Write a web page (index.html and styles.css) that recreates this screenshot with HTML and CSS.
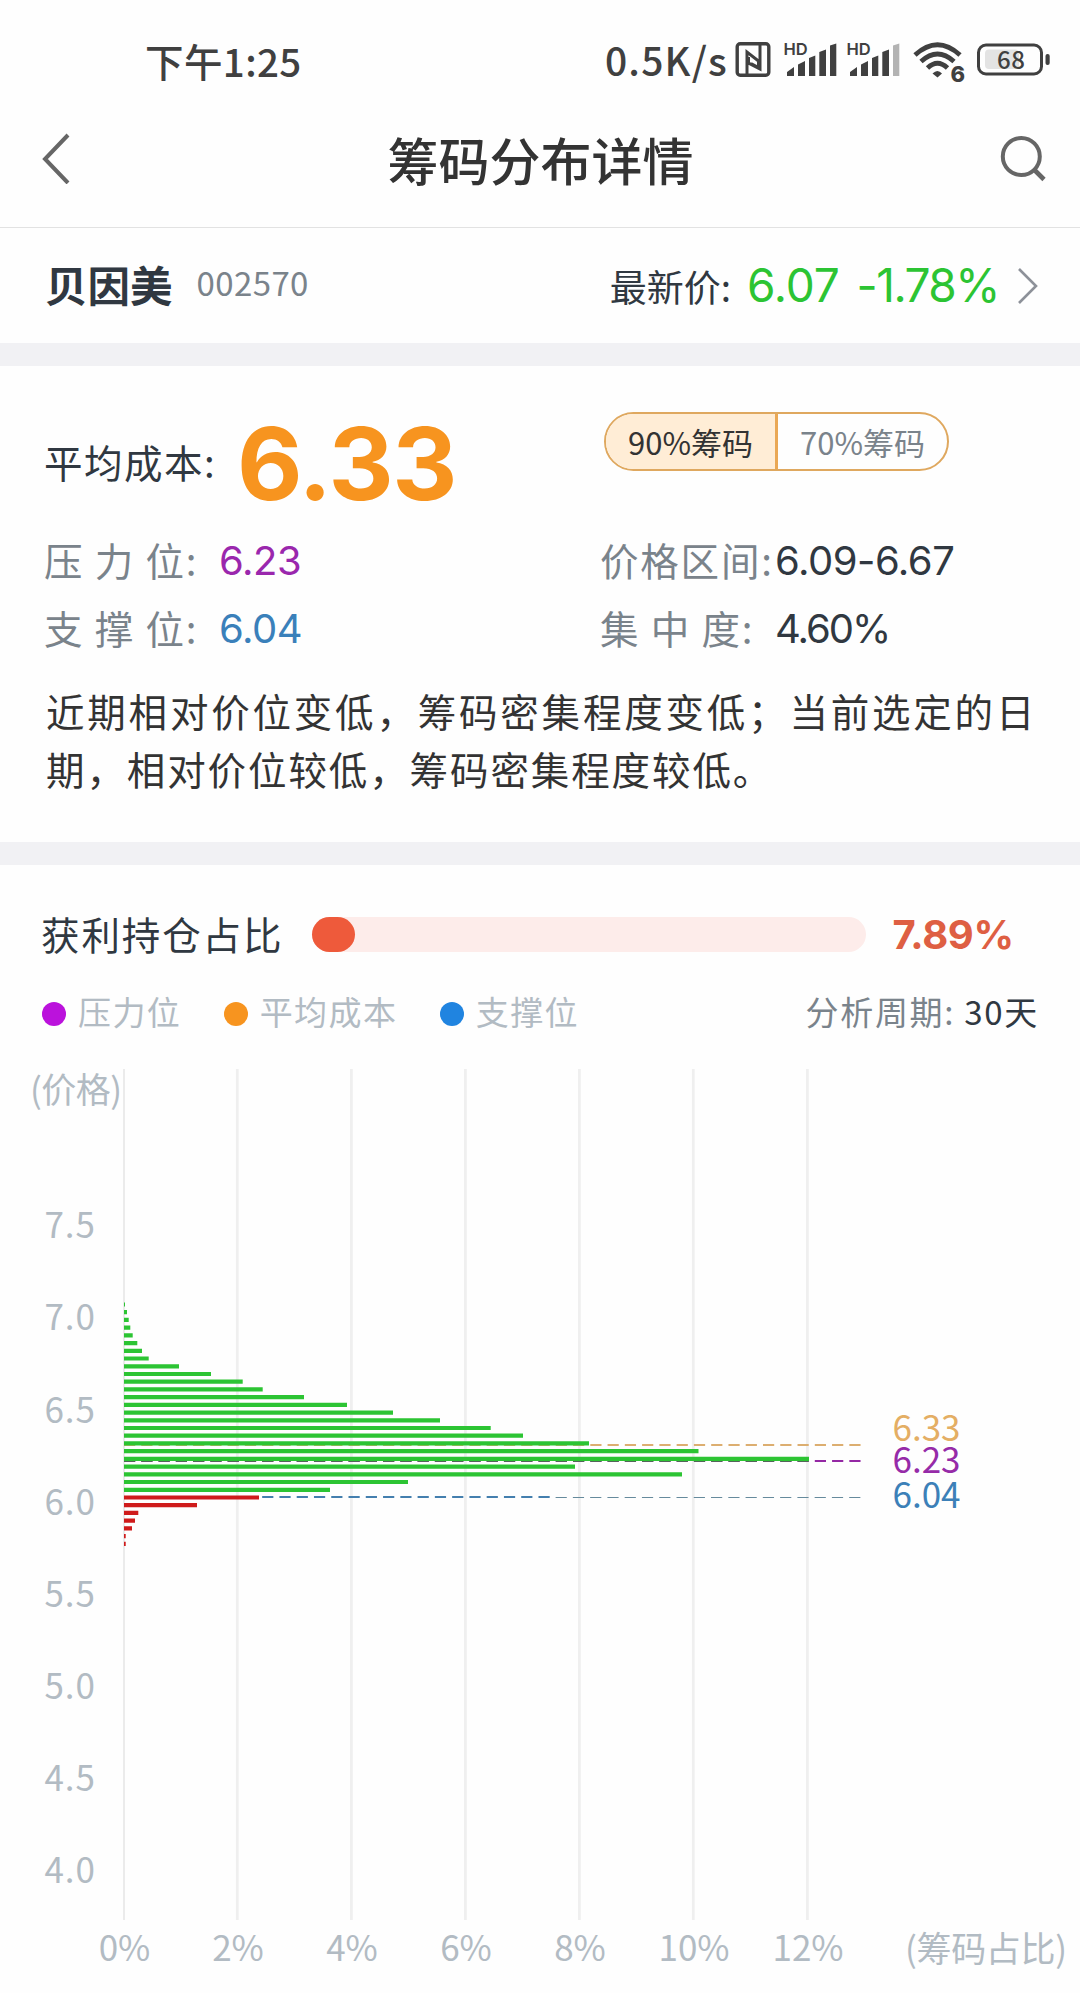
FILE: index.html
```
<!DOCTYPE html>
<html lang="zh-CN">
<head>
    <meta charset="UTF-8">
    <meta name="viewport" content="width=device-width, initial-scale=1.0">
    <title>筹码分布详情</title>
    <link rel="stylesheet" href="styles.css">
</head>
<body>
<div class="status-bar">
    <span class="time">下午1:25</span>
    <span class="speed">0.5K/s</span>
    <svg class="status-icons" width="320" height="50" viewBox="732 36 320 50">
        <!-- nfc -->
        <rect x="737.2" y="43.7" width="31.6" height="31.6" rx="3" fill="none" stroke="#404040" stroke-width="3.4"/>
        <path d="M747 74V52L758.500 61V67.500L751 63.500M760 45V69L748.500 63V57" fill="none" stroke="#404040" stroke-width="3"/>
        <!-- signal 1 -->
        <text class="hd" x="783.5" y="55">HD</text>
        <path d="M787 76V72L794 67V76ZM798 76V64.500L805 61V76ZM809 76V58L815.300 55.500V76ZM819.300 76V52L826 49.500V76ZM830 76V45.500L836.300 43.500V76Z" fill="#404040"/>
        <!-- signal 2 -->
        <text class="hd" x="846.5" y="55">HD</text>
        <path d="M850 76V72L857 67V76ZM861 76V64.500L868 61V76ZM872 76V58L878.300 55.500V76ZM882.300 76V52L889 49.500V76Z" fill="#404040"/>
        <path d="M893 76V45.500L899.300 43.500V76Z" fill="#b3b3b3"/>
        <!-- wifi -->
        <g fill="none" stroke="#404040" stroke-width="4.800">
            <path d="M915 55Q937.500 34.500 960 55"/>
            <path d="M921 61.500Q937.500 46.500 954 61.500"/>
            <path d="M927.500 68Q937.500 58.500 947.500 68"/>
        </g>
        <path d="M932.500 73.500Q937.500 68.500 942 73.500L937.500 77.500Z" fill="#404040"/>
        <text class="wifi-gen" x="950.500" y="82">6</text>
        <!-- battery -->
        <rect x="985" y="49.500" width="34" height="19.500" rx="4" fill="#e3e3e3"/>
        <rect x="978.500" y="45" width="63" height="29" rx="7.500" fill="none" stroke="#404040" stroke-width="3"/>
        <rect x="1045.500" y="54" width="4.200" height="11" rx="2" fill="#404040"/>
        <text class="battery" x="997" y="69" textLength="28">68</text>
    </svg>
</div>

<div class="header">
    <svg class="back" width="30" height="52" viewBox="0 0 30 52">
        <path d="M27 3L4 27L27 51" fill="none" stroke="#666" stroke-width="4"/>
    </svg>
    <h1>筹码分布详情</h1>
    <svg class="search" width="48" height="48" viewBox="0 0 48 48">
        <circle cx="21.300" cy="22.500" r="18.500" fill="none" stroke="#666" stroke-width="4"/>
        <path d="M34 35.500L44 45.500" stroke="#666" stroke-width="4.600"/>
    </svg>
</div>

<div class="stock">
    <span class="stock-name">贝因美</span>
    <span class="stock-code">002570</span>
    <span class="price-label">最新价:</span>
    <span class="price">6.07</span>
    <span class="change">-1.78%</span>
    <svg class="more" width="22" height="38" viewBox="0 0 22 38">
        <path d="M2 2L19 19L2 36" fill="none" stroke="#8d9199" stroke-width="2.600"/>
    </svg>
</div>

<div class="band"></div>

<div class="summary">
    <div class="row row-top">
        <div class="col-left">
            <span class="label dark">平均成本:</span>
            <span class="avg">6.33</span>
        </div>
        <div class="tabs">
            <span class="tab active">90%筹码</span>
            <span class="tab">70%筹码</span>
        </div>
    </div>
    <div class="row">
        <div class="col-left">
            <span class="label">压 力 位:</span>
            <span class="value purple">6.23</span>
        </div>
        <div class="col-right">
            <span class="label">价格区间:</span>
            <span class="value">6.09-6.67</span>
        </div>
    </div>
    <div class="row">
        <div class="col-left">
            <span class="label">支 撑 位:</span>
            <span class="value blue">6.04</span>
        </div>
        <div class="col-right">
            <span class="label">集 中 度:</span>
            <span class="value percent">4.60%</span>
        </div>
    </div>
    <p class="desc"><span class="line-full">近期相对价位变低，筹码密集程度变低；当前选定的日</span><br>期，相对价位较低，筹码密集程度较低。</p>
</div>

<div class="band"></div>

<div class="profit">
    <span class="label dark">获利持仓占比</span>
    <div class="progress"><div class="progress-fill" style="width: 7.89%"></div></div>
    <span class="profit-value">7.89%</span>
</div>

<div class="legend">
    <span class="legend-item"><i class="dot dot-purple"></i>压力位</span>
    <span class="legend-item"><i class="dot dot-orange"></i>平均成本</span>
    <span class="legend-item"><i class="dot dot-blue"></i>支撑位</span>
    <span class="period">分析周期: <b>30天</b></span>
</div>

<svg class="chart" width="1080" height="951" viewBox="0 1042 1080 951">
    <!-- grid -->
    <path d="M124 1069V1920" stroke="#ebebeb" stroke-width="2"/>
    <path d="M237.300 1069V1920M351.400 1069V1920M465.400 1069V1920M579.400 1069V1920M693.300 1069V1920M807.400 1069V1920" stroke="#efefef" stroke-width="2.800"/>

    <!-- level lines -->
    <g fill="none" stroke-dasharray="11.200 6.070">
        <path d="M124 1445H862" stroke="#dcae70" stroke-width="2"/>
        <path d="M124 1461H862" stroke="#9428a4" stroke-width="2"/>
        <path d="M124 1461H809" stroke="#54655a" stroke-width="2"/>
        <path d="M124 1497H551" stroke="#447fae" stroke-width="2"/>
        <path d="M555.600 1497.500H862" stroke="#668a9c" stroke-width="1"/>
    </g>

    <!-- chips above the current price -->
    <path stroke="#2cc433" stroke-width="4.200" d="M124 1304.500H125M124 1312.200H127M124 1319.900H128.700M124 1327.700H130.300M124 1335.400H132.700M124 1343.100H137.300M124 1350.800H142M124 1358.500H148.700M124 1366.300H179M124 1374H211M124 1381.700H242.700M124 1389.400H262.700M124 1397.100H304M124 1404.900H347M124 1412.600H393M124 1420.300H440M124 1428H490.700M124 1435.700H523M124 1443.400H589M124 1451.200H698.500M124 1458.900H809M124 1466.600H575M124 1474.300H682M124 1482H408M124 1489.800H330"/>
    <!-- chips below the current price -->
    <path stroke="#cf1b1b" stroke-width="4.200" d="M124 1497.500H259M124 1505.200H197M124 1512.900H138.300M124 1520.700H135M124 1528.400H132M124 1536.100H125.700M124 1543.800H125.700"/>

    <g class="level">
        <text x="892.500" y="1441" fill="#e4ae64">6.33</text>
        <text x="892.500" y="1473" fill="#962ba8">6.23</text>
        <text x="892.500" y="1508" fill="#3c80b8">6.04</text>
    </g>

    <g class="axis">
        <text x="30" y="1103" textLength="92">(价格)</text>
        <g class="prices" text-anchor="end">
            <text x="96" y="1238">7.5</text>
            <text x="96" y="1330">7.0</text>
            <text x="96" y="1422.500">6.5</text>
            <text x="96" y="1514.500">6.0</text>
            <text x="96" y="1607">5.5</text>
            <text x="96" y="1699">5.0</text>
            <text x="96" y="1791">4.5</text>
            <text x="96" y="1883">4.0</text>
        </g>
        <g text-anchor="middle">
            <text x="124.500" y="1961">0%</text>
            <text x="238" y="1961">2%</text>
            <text x="352" y="1961">4%</text>
            <text x="466" y="1961">6%</text>
            <text x="580" y="1961">8%</text>
            <text x="694" y="1961">10%</text>
            <text x="808" y="1961">12%</text>
        </g>
        <text x="905" y="1962" textLength="162">(筹码占比)</text>
    </g>
</svg>
</body>
</html>
```

FILE: styles.css
```
* {
    box-sizing: border-box;
}

body {
    width: 1080px;
    margin: 0;
    background: #fefefe;
    color: #303841;
    font-family: "Noto Sans CJK SC", sans-serif;
    overflow-x: hidden;
}

span {
    white-space: nowrap;
}

/* status bar */
.status-bar {
    display: flex;
    align-items: center;
    height: 110px;
    padding: 12px 28px 0 145px;
    color: #404040;
    font-weight: 500;
}

.time {
    flex: 1;
    font-size: 38.5px;
    line-height: 50px;
    margin-top: -3px;
    letter-spacing: 0.4px;
}

.speed {
    font-size: 39px;
    line-height: 50px;
    margin: -5px 4px 0 0;
    letter-spacing: 1.2px;
}

.hd {
    font: 600 16.5px Inter, sans-serif;
    fill: #404040;
}

.wifi-gen {
    font: 800 22px Inter, sans-serif;
    fill: #404040;
}

.battery {
    font: 500 24px "Noto Sans CJK SC", sans-serif;
    fill: #404040;
}

/* title bar */
.header {
    display: flex;
    align-items: center;
    justify-content: space-between;
    height: 118px;
    padding: 0 32px 21px 41px;
    border-bottom: 1px solid #e2e2e2;
}

h1 {
    margin: 0;
    font-size: 51px;
    line-height: 60px;
    font-weight: 500;
    color: #333;
    position: relative;
    left: -4px;
    top: 1px;
}

.header .search {
    margin-left: -18px;
}

/* stock line */
.stock {
    display: flex;
    align-items: center;
    height: 115px;
    padding: 0 41px 0 45px;
}

.stock-name {
    font-size: 42.5px;
    line-height: 60px;
    font-weight: 700;
    margin-top: -4px;
}

.stock-code {
    flex: 1;
    margin: -8px 0 0 24px;
    font-size: 33px;
    line-height: 50px;
    letter-spacing: 0.4px;
    color: #7a838b;
}

.price-label {
    font-size: 37px;
    line-height: 50px;
    margin-top: 0;
}

.price,
.change {
    font-family: Inter, sans-serif;
    font-size: 46px;
    line-height: 50px;
    color: #2cc433;
    margin-top: -2px;
}

.price {
    margin-left: 16px;
    letter-spacing: -0.2px;
}

.change {
    margin-left: 17px;
    letter-spacing: -1.5px;
}

.more {
    margin-left: 18px;
}

.band {
    height: 23px;
    background: #f1f1f4;
}

/* summary */
.summary {
    height: 476px;
    padding: 46px 45px 0 44px;
}

.row {
    display: flex;
    align-items: center;
    height: 68px;
}

.row-top {
    height: 102px;
    margin-bottom: 13px;
}

.col-left {
    display: flex;
    align-items: center;
    width: 556px;
}

.col-right {
    display: flex;
    align-items: center;
}

.label {
    width: 175px;
    font-size: 38.5px;
    line-height: 56px;
    letter-spacing: 1.8px;
    margin-top: -4px;
    color: #7a838b;
}

.dark {
    color: #303841;
}

.row-top .label {
    width: 193px;
    letter-spacing: 1.5px;
}

.avg {
    font-family: Inter, sans-serif;
    font-size: 101px;
    line-height: 102px;
    font-weight: 700;
    letter-spacing: -1.3px;
    color: #f7941f;
}

.value {
    font-family: Inter, sans-serif;
    font-size: 40px;
    line-height: 50px;
    letter-spacing: -0.5px;
}

.percent {
    letter-spacing: -2px;
}

.purple {
    color: #9a27ad;
}

.blue {
    color: #3a80ba;
}

.tabs {
    display: flex;
    align-self: flex-start;
    width: 345px;
    height: 59px;
    margin-left: 4px;
    border: 2px solid #dfa85f;
    border-radius: 30px;
    overflow: hidden;
}

.tab {
    flex: 1;
    font-size: 31px;
    line-height: 56px;
    text-align: center;
    color: #7a838b;
}

.tab.active {
    flex: 0 0 172px;
    background: #ffedd6;
    border-right: 3px solid #eaa855;
    color: #333;
}

.desc {
    margin: 18px 0 0 2px;
    font-size: 38.5px;
    line-height: 58px;
    letter-spacing: 1.9px;
    white-space: nowrap;
    color: #333;
}

.line-full {
    letter-spacing: 2.8px;
}

/* profit ratio */
.profit {
    display: flex;
    align-items: center;
    height: 69px;
    margin-top: 35px;
    padding-left: 41px;
}

.profit .label {
    width: 270.5px;
    letter-spacing: 1.9px;
}

.progress {
    width: 554px;
    height: 35px;
    border-radius: 18px;
    background: #fdecea;
}

.progress-fill {
    height: 100%;
    border-radius: 18px;
    background: #ee5a3b;
}

.profit-value {
    margin-left: 27px;
    font-family: Inter, sans-serif;
    font-size: 40px;
    font-weight: 700;
    letter-spacing: -0.4px;
    color: #de5f43;
}

.legend {
    display: flex;
    align-items: center;
    height: 62px;
    margin-top: 11px;
    padding: 0 41px;
    font-size: 33px;
    line-height: 50px;
    letter-spacing: 1.4px;
    color: #b2bbc3;
}

.legend-item {
    display: flex;
    align-items: center;
    margin-right: 41.5px;
}

.dot {
    width: 24px;
    height: 24px;
    margin: 5px 12px 0 1px;
    border-radius: 50%;
}

.dot-purple {
    background: #bb12dc;
}

.dot-orange {
    background: #f7941f;
}

.dot-blue {
    background: #2084e0;
}

.period {
    margin-left: auto;
    letter-spacing: 1.7px;
    color: #7a838b;
}

.period b {
    font-weight: 400;
    color: #303841;
}

/* chart */
.chart {
    display: block;
}

.axis text {
    font-size: 35px;
    fill: #b2bbc3;
}

.axis .prices text {
    letter-spacing: 1px;
}

.level text {
    font-size: 35px;
}
```
